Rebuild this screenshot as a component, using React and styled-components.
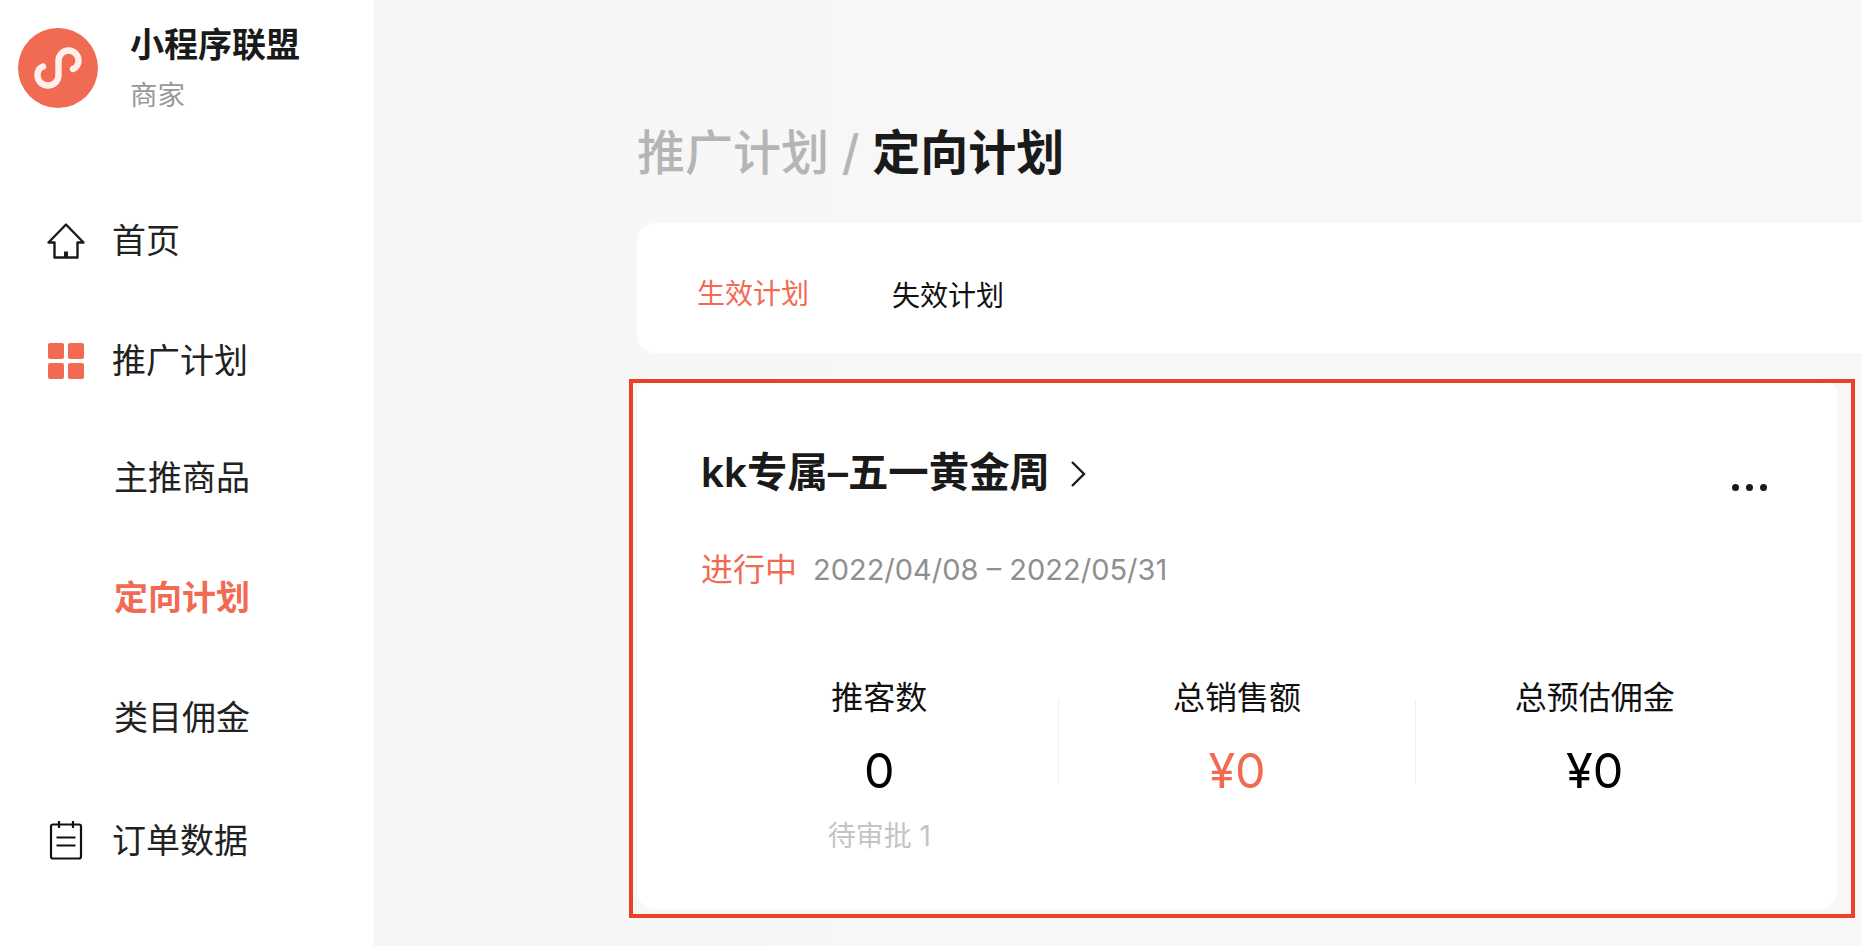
import styled, { createGlobalStyle } from 'styled-components';

const orange = '#f16b53';
const ink = '#1a1a1a';

const GlobalStyle = createGlobalStyle`
	html, body {
		margin: 0;
		height: 100%;
		overflow: hidden;
	}
	* {
		box-sizing: border-box;
	}
	body {
		font-family: 'Inter', 'Noto Sans CJK SC', sans-serif;
		color: ${ink};
	}
`;

const Page = styled.div`
	display: flex;
	width: 1862px;
	height: 946px;
	overflow: hidden;
	background: linear-gradient(90deg, #f5f6f8 0%, #f7f7f7 45%);
`;

const Sidebar = styled.aside`
	flex: 0 0 375px;
	background: #fff;
	border-right: 1px solid #f1f2f4;
	padding-top: 28px;
`;

const Brand = styled.div`
	display: flex;
	gap: 32px;
	padding-left: 18px;
`;

const BrandText = styled.div`
	display: flex;
	flex-direction: column;
`;

const BrandName = styled.div`
	font-size: 34px;
	font-weight: 600;
	line-height: 34px;
`;

const BrandRole = styled.div`
	margin-top: 18px;
	font-size: 27.5px;
	line-height: 30px;
	color: #999;
`;

const Nav = styled.nav`
	margin-top: 70px;
`;

const NavRow = styled.div`
	display: flex;
	align-items: center;
	gap: 27px;
	height: 120px;
	padding-left: ${(p) => (p.$sub ? '114px' : '47px')};
	padding-bottom: ${(p) => (p.$sub ? '9px' : '0')};
	font-size: 34px;
	color: ${(p) => (p.$active ? orange : '#222')};
	font-weight: ${(p) => (p.$active ? 600 : 400)};
`;

const NavLabel = styled.span`
	margin-top: -4px;
`;

const NavIcon = styled.svg`
	flex: 0 0 38px;
	width: 38px;
	height: ${(p) => (p.$tall ? '40px' : '38px')};
`;

const Main = styled.main`
	flex: 1;
	min-width: 0;
	padding-left: 262px;
	overflow: hidden;
`;

const Heading = styled.h1`
	display: flex;
	align-items: center;
	height: 223px;
	margin: 0;
	padding: 96px 0 21px 0;
	font-size: 48px;
	font-weight: 500;
	color: #b5b5b5;
	white-space: pre;
	strong {
		font-weight: 700;
		color: ${ink};
	}
`;

const Tabs = styled.div`
	display: flex;
	gap: 83px;
	height: 130px;
	padding: 10px 0 0 60px;
	align-items: center;
	background: #fff;
	border-radius: 18px 0 0 18px;
`;

const Tab = styled.div`
	font-size: 28px;
	color: ${(p) => (p.$active ? orange : '#111')};
	margin-top: ${(p) => (p.$active ? '-2px' : '2px')};
`;

const CardRow = styled.div`
	display: flex;
	gap: 24px;
	margin-top: 24px;
`;

const Card = styled.section`
	position: relative;
	flex: 0 0 1200px;
	height: 532px;
	padding: 70px 64px 0 64px;
	background: #fff;
	border-radius: 18px;
`;

const Highlight = styled.div`
	position: absolute;
	top: 2px;
	left: -8px;
	right: -18px;
	bottom: -9px;
	border: 4px solid #ee4026;
	pointer-events: none;
`;

const TitleRow = styled.div`
	display: flex;
	align-items: center;
	height: 52px;
`;

const PlanTitle = styled.h2`
	margin: 0;
	font-size: 40.4px;
	font-weight: 600;
	line-height: 52px;
`;

const Chevron = styled.svg`
	width: 18px;
	height: 30px;
	margin: 2px 0 0 19px;
`;

const Dots = styled.div`
	display: flex;
	gap: 7px;
	margin: 28px 6px 0 auto;
	i {
		width: 7px;
		height: 7px;
		border-radius: 50%;
		background: ${ink};
	}
`;

const StatusRow = styled.div`
	display: flex;
	align-items: center;
	gap: 17px;
	height: 52px;
	margin-top: 44px;
`;

const Status = styled.span`
	margin-top: -5px;
	font-size: 32px;
	color: ${orange};
`;

const Period = styled.span`
	margin-left: -1px;
	font-size: 29px;
	color: #8f8f8f;
`;

const Stats = styled.div`
	display: flex;
	margin-top: 78px;
`;

const Stat = styled.div`
	flex: 1;
	text-align: center;
`;

const StatLabel = styled.div`
	font-size: 32px;
	line-height: 50px;
	color: #111;
`;

const StatValue = styled.div`
	margin-top: 18px;
	font-size: 48.5px;
	line-height: 60px;
	color: ${(p) => (p.$accent ? orange : '#000')};
`;

const StatNote = styled.div`
	margin-top: 15px;
	font-size: 28px;
	line-height: 40px;
	color: #c4c4c4;
`;

const StatDivider = styled.div`
	flex: 0 0 1px;
	height: 84px;
	margin-top: 26px;
	background: #f0f0f0;
`;

const Logo = () => (
	<svg width='80' height='80' viewBox='0 0 80 80'>
		<circle cx='40' cy='40' r='40' fill={orange} />
		<path
			d='M25 38.5C21 40 19.5 43.5 19.5 47C19.5 53 24 57.5 30 57.5C36 57.5 40.5 53 40.5 47L40.5 33C40.5 27 45 22.5 50.5 22.5C56 22.5 60.5 27 60.5 32.5C60.5 36 58.5 39.5 55 41'
			fill='none'
			stroke='#fdf0ec'
			strokeWidth='6.4'
			strokeLinecap='round'
		/>
	</svg>
);

const HomeIcon = () => (
	<NavIcon viewBox='0 0 38 38'>
		<path
			d='M19 3.5L1.5 21.5H7.5V36.5H30.5V21.5H36.5Z'
			fill='none'
			stroke={ink}
			strokeWidth='2.4'
			strokeLinejoin='round'
		/>
		<rect x='17' y='30.5' width='4' height='6' fill={ink} />
	</NavIcon>
);

const GridIcon = () => (
	<NavIcon viewBox='0 0 38 38'>
		<rect x='1' y='2' width='16' height='16' rx='2' fill={orange} />
		<rect x='21' y='2' width='16' height='16' rx='2' fill={orange} />
		<rect x='1' y='22' width='16' height='16' rx='2' fill={orange} />
		<rect x='21' y='22' width='16' height='16' rx='2' fill={orange} />
	</NavIcon>
);

const NoteIcon = () => (
	<NavIcon $tall viewBox='0 0 38 40'>
		<rect x='4' y='4.5' width='30' height='34' rx='2' fill='none' stroke='#111' strokeWidth='2.2' />
		<path d='M12 1V8M26 1V8M9.5 17.5H28.5M9.5 25.5H28.5' fill='none' stroke='#111' strokeWidth='2.2' />
	</NavIcon>
);

const App = () => {
	return (
		<Page>
			<GlobalStyle />
			<Sidebar>
				<Brand>
					<Logo />
					<BrandText>
						<BrandName>小程序联盟</BrandName>
						<BrandRole>商家</BrandRole>
					</BrandText>
				</Brand>
				<Nav>
					<NavRow>
						<HomeIcon />
						<NavLabel>首页</NavLabel>
					</NavRow>
					<NavRow>
						<GridIcon />
						<NavLabel>推广计划</NavLabel>
					</NavRow>
					<NavRow $sub>主推商品</NavRow>
					<NavRow $sub $active>定向计划</NavRow>
					<NavRow $sub>类目佣金</NavRow>
					<NavRow>
						<NoteIcon />
						<NavLabel>订单数据</NavLabel>
					</NavRow>
				</Nav>
			</Sidebar>
			<Main>
				<Heading>
					推广计划 / <strong>定向计划</strong>
				</Heading>
				<Tabs>
					<Tab $active>生效计划</Tab>
					<Tab>失效计划</Tab>
				</Tabs>
				<CardRow>
					<Card>
						<TitleRow>
							<PlanTitle>kk专属–五一黄金周</PlanTitle>
							<Chevron viewBox='0 0 18 30'>
								<path d='M3 3L15 15L3 27' fill='none' stroke={ink} strokeWidth='2.4' />
							</Chevron>
							<Dots>
								<i />
								<i />
								<i />
							</Dots>
						</TitleRow>
						<StatusRow>
							<Status>进行中</Status>
							<Period>2022/04/08 – 2022/05/31</Period>
						</StatusRow>
						<Stats>
							<Stat>
								<StatLabel>推客数</StatLabel>
								<StatValue>0</StatValue>
								<StatNote>待审批 1</StatNote>
							</Stat>
							<StatDivider />
							<Stat>
								<StatLabel>总销售额</StatLabel>
								<StatValue $accent>¥0</StatValue>
							</Stat>
							<StatDivider />
							<Stat>
								<StatLabel>总预估佣金</StatLabel>
								<StatValue>¥0</StatValue>
							</Stat>
						</Stats>
						<Highlight />
					</Card>
					<Card />
				</CardRow>
			</Main>
		</Page>
	);
};

export default App;
